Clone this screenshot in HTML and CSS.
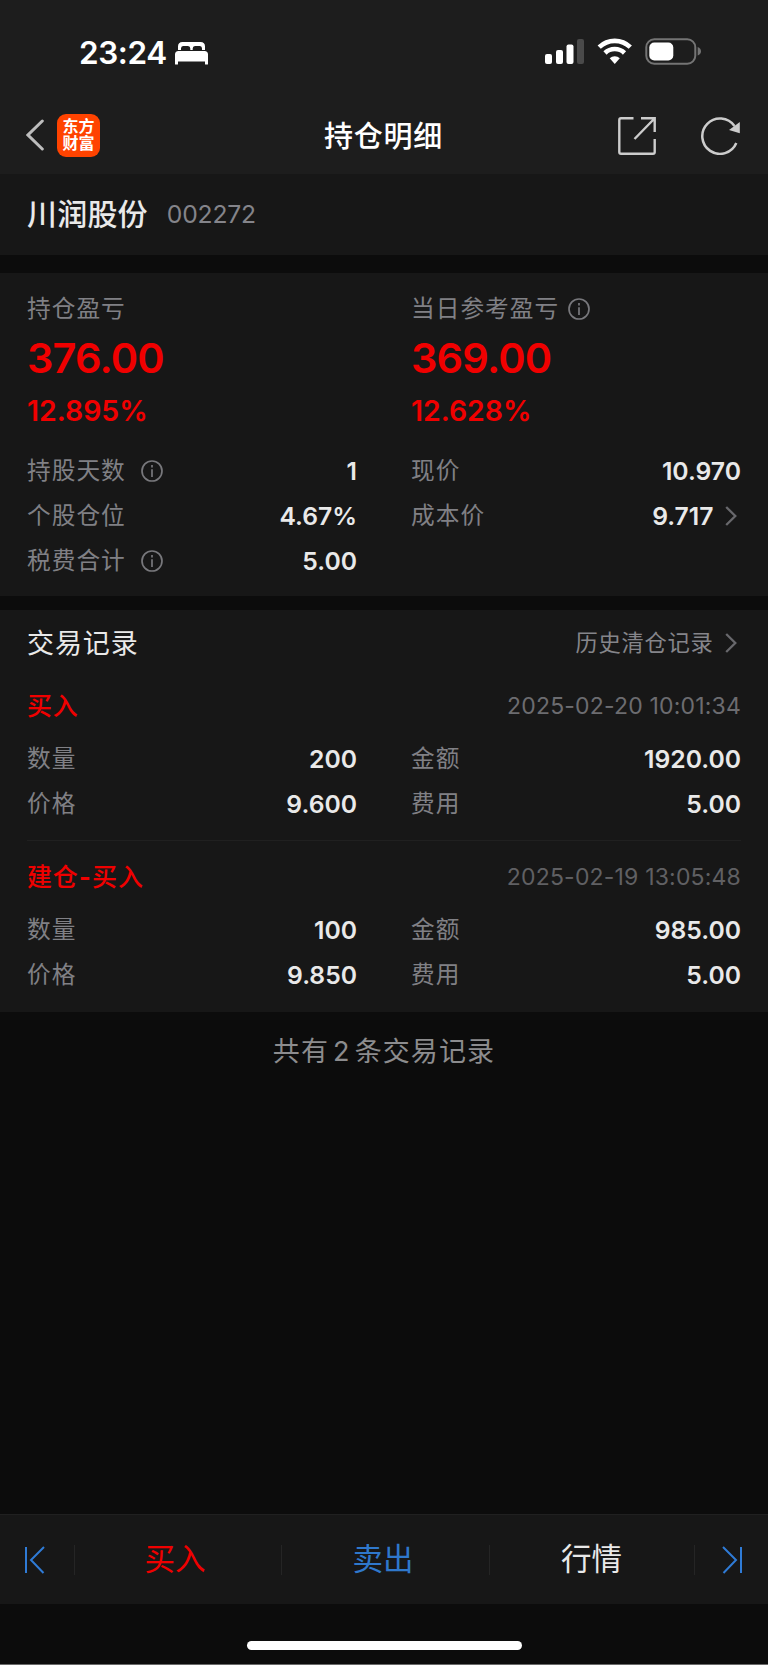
FILE: index.html
```html
<!DOCTYPE html>
<html lang="zh-CN">
<head>
<meta charset="utf-8">
<title>持仓明细</title>
<link rel="stylesheet" href="styles.css">
</head>
<body>
<div class="screen">
  <header class="top">
    <div class="status">
      <div class="status-left">
        <span class="clock">23:24</span>
        <svg class="bed" width="33" height="23" viewBox="0 0 33 23"><path fill="#fff" d="M3 8V4.500Q3 0 7.500 0H25.500Q30 0 30 4.500V8H27V6.500Q27 4 25 4H20Q17.700 4 17.700 6.500V8H15.300V6.500Q15.300 4 13 4H8Q6 4 6 6.500V8ZM0 22V12.500Q0 9 3.500 9H29.500Q33 9 33 12.500V22Q33 22.500 32.500 22.500H30.500Q30 22.500 30 22V19.500H3V22Q3 22.500 2.500 22.500H.5Q0 22.500 0 22Z"/></svg>
      </div>
      <svg class="indicators" width="157" height="28" viewBox="0 0 157 28">
        <g fill="#fff"><rect x="0" y="16" width="7" height="10" rx="2"/><rect x="11" y="12" width="7" height="14" rx="2"/><rect x="21.500" y="6.500" width="7" height="19.500" rx="2"/></g>
        <rect x="32" y="1" width="7" height="25" rx="2" fill="#4a4a4a"/>
        <g fill="none" stroke="#fff" stroke-width="4.600"><path d="M54.200 9.200A22.200 22.200 0 0 1 85.300 9.200"/><path d="M60 15A14 14 0 0 1 79.500 15"/></g>
        <path fill="#fff" d="M64.700 20.200A7.400 7.400 0 0 1 74.800 20.200L69.750 26Z"/>
        <rect x="101.300" y="1.300" width="49" height="24.400" rx="8" fill="none" stroke="#747474" stroke-width="2"/>
        <rect x="104.300" y="4.500" width="24" height="18" rx="5" fill="#fff"/>
        <path fill="#747474" d="M152.700 9Q156 10.300 156 13.300T152.700 17.600Z"/>
      </svg>
    </div>
    <nav class="nav">
      <div class="nav-left">
        <svg width="18" height="32" viewBox="0 0 18 32"><path d="M16.300 2L2 16L16.300 30" fill="none" stroke="#bdbdbd" stroke-width="3" stroke-linecap="round"/></svg>
        <div class="logo"><span>东方</span><span>财富</span></div>
      </div>
      <h1 class="nav-title">持仓明细</h1>
      <div class="nav-right">
        <svg width="38" height="38" viewBox="0 0 38 38"><g fill="none" stroke="#ccc" stroke-width="2.400"><path d="M15.500 1.300H3Q1.300 1.300 1.300 3V35Q1.300 36.700 3 36.700H35Q36.700 36.700 36.700 35V22"/><path d="M23 1.300H36.700V15M36.500 1.500L16.500 22"/></g></svg>
        <svg width="40" height="38" viewBox="0 0 40 38"><path d="M35.300 26A17.700 17.700 0 1 1 33.500 9" fill="none" stroke="#ccc" stroke-width="2.500"/><path d="M38.800 5V16.200L28 13Z" fill="#ccc"/></svg>
      </div>
    </nav>
  </header>

  <section class="stock"><span class="stock-name">川润股份</span><span class="stock-code">002272</span></section>

  <section class="summary">
    <div class="cols">
      <div class="profit">
        <div class="label">持仓盈亏</div>
        <div class="amount">376.00</div>
        <div class="percent">12.895%</div>
      </div>
      <div class="profit">
        <div class="label">当日参考盈亏<svg class="info near" viewBox="0 0 22 22"><circle cx="11" cy="11" r="10"/><path d="M11 9.300V17M11 5V7.400"/></svg></div>
        <div class="amount">369.00</div>
        <div class="percent">12.628%</div>
      </div>
    </div>
    <div class="cols facts">
      <div class="row"><span class="label">持股天数<svg class="info" viewBox="0 0 22 22"><circle cx="11" cy="11" r="10"/><path d="M11 9.300V17M11 5V7.400"/></svg></span><b class="value">1</b></div>
      <div class="row"><span class="label">现价</span><b class="value">10.970</b></div>
      <div class="row"><span class="label">个股仓位</span><b class="value">4.67%</b></div>
      <div class="row"><span class="label">成本价</span><b class="value">9.717<svg class="more" viewBox="0 0 12 20"><path d="M1.200 1L10.300 10L1.200 19"/></svg></b></div>
      <div class="row"><span class="label">税费合计<svg class="info" viewBox="0 0 22 22"><circle cx="11" cy="11" r="10"/><path d="M11 9.300V17M11 5V7.400"/></svg></span><b class="value">5.00</b></div>
    </div>
  </section>

  <section class="records">
    <div class="records-head"><h2 class="records-title">交易记录</h2><span class="history">历史清仓记录<svg class="more" viewBox="0 0 12 20"><path d="M1.200 1L10.300 10L1.200 19"/></svg></span></div>
    <article class="record">
      <div class="record-head"><span class="kind">买入</span><time class="time">2025-02-20 10:01:34</time></div>
      <div class="cols">
        <div class="row"><span class="label">数量</span><b class="value">200</b></div>
        <div class="row"><span class="label">金额</span><b class="value">1920.00</b></div>
        <div class="row"><span class="label">价格</span><b class="value">9.600</b></div>
        <div class="row"><span class="label">费用</span><b class="value">5.00</b></div>
      </div>
    </article>
    <article class="record">
      <div class="record-head"><span class="kind">建仓<span class="dash">-</span>买入</span><time class="time dim">2025-02-19 13:05:48</time></div>
      <div class="cols">
        <div class="row"><span class="label">数量</span><b class="value">100</b></div>
        <div class="row"><span class="label">金额</span><b class="value">985.00</b></div>
        <div class="row"><span class="label">价格</span><b class="value">9.850</b></div>
        <div class="row"><span class="label">费用</span><b class="value">5.00</b></div>
      </div>
    </article>
  </section>

  <main class="total">共有<span class="count">2</span>条交易记录</main>

  <footer class="tabs">
    <div class="tab edge"><svg width="20" height="28" viewBox="0 0 20 28"><path d="M1 1V27M19 1L6 14L18.500 27"/></svg></div>
    <div class="tab buy">买入</div>
    <div class="tab sell">卖出</div>
    <div class="tab quote">行情</div>
    <div class="tab edge"><svg width="20" height="28" viewBox="0 0 20 28"><path d="M19 1V27M1 1L14 14L1.500 27"/></svg></div>
  </footer>
  <div class="home"><div class="home-bar"></div></div>
</div>
</body>
</html>
```

FILE: styles.css
```css
* { box-sizing: border-box; }
body {
  margin: 0;
  background: #0c0c0c;
  color: #e9e9e9;
  font-family: Inter, "Noto Sans CJK SC", sans-serif;
}
svg { display: block; flex: none; }
h1, h2 { margin: 0; }

.screen {
  display: flex;
  flex-direction: column;
  width: 768px;
  height: 1665px;
  border-bottom: 1px solid #6a6a6a;
}

.top { height: 174px; background: #1d1d1d; }
.status {
  display: flex;
  justify-content: space-between;
  padding: 38px 66px 0 79px;
  height: 98px;
}
.status-left { display: flex; height: 30px; align-items: center; gap: 8px; }
.clock { font-size: 31.500px; font-weight: 600; line-height: 30px; letter-spacing: -0.400px; color: #fff; }

.nav {
  display: grid;
  grid-template-columns: 1fr auto 1fr;
  align-items: center;
  height: 76px;
  padding: 0 27px 0 26px;
}
.nav-left { display: flex; align-items: center; gap: 13px; padding-bottom: 2px; }
.logo {
  display: flex;
  flex-direction: column;
  align-items: center;
  justify-content: center;
  width: 43px;
  height: 43px;
  border-radius: 9px;
  background: #ff4300;
  color: #fff;
  font-size: 16px;
  font-weight: 700;
  line-height: 17.500px;
}
.nav-title { padding-top: 1px; font-size: 29px; font-weight: 500; line-height: 40px; letter-spacing: 0.700px; color: #fff; }
.nav-right { display: flex; align-items: center; justify-content: flex-end; gap: 45px; padding-bottom: 1px; }

.stock {
  display: flex;
  align-items: center;
  height: 81px;
  padding: 0 27px 2px;
  background: #171717;
}
.stock-name { font-size: 30px; font-weight: 500; line-height: 40px; letter-spacing: 0.200px; }
.stock-code { margin-left: 19px; font-size: 24.700px; line-height: 40px; letter-spacing: -0.200px; color: #84848a; }

.summary { height: 323px; margin-top: 18px; padding: 18px 27px 0; background: #171717; }
.cols { display: grid; grid-template-columns: 1fr 1fr; column-gap: 54px; }
.label {
  display: flex;
  align-items: center;
  font-size: 23.700px;
  line-height: 36px;
  letter-spacing: 1px;
  color: #808085;
}
.amount { font-size: 41.500px; font-weight: 600; line-height: 62px; letter-spacing: -0.800px; color: #f00000; }
.percent { padding-top: 1px; font-size: 28.400px; font-weight: 600; line-height: 42px; color: #f00000; }
.facts { margin-top: 17px; }
.row { display: flex; align-items: center; justify-content: space-between; height: 44.700px; }
.value { display: flex; align-items: center; font-size: 24.700px; font-weight: 600; line-height: 36px; }
.info { width: 22px; height: 22px; margin-left: 15px; fill: none; stroke: #78787c; stroke-width: 1.700px; }
.near { margin-left: 9px; }
.more { width: 12px; height: 20px; margin: 0 4px 0 11.500px; fill: none; stroke: #68686c; stroke-width: 2.300px; }

.records { height: 402px; margin-top: 14px; padding: 0 27px; background: #171717; }
.records-head { display: flex; align-items: center; justify-content: space-between; height: 66px; }
.records-title { padding-top: 1px; font-size: 27px; font-weight: 400; line-height: 40px; letter-spacing: 0.900px; }
.history { display: flex; align-items: center; font-size: 22.300px; line-height: 36px; letter-spacing: 0.700px; color: #85858a; }
.record { padding-bottom: 14px; }
.record + .record { padding-top: 6px; border-top: 1px solid #202020; }
.record-head { display: flex; align-items: center; justify-content: space-between; height: 60.600px; padding-bottom: 1px; }
.kind { font-size: 25px; font-weight: 500; line-height: 36px; letter-spacing: 0.800px; color: #f00000; }
.dash { margin: 0 0.500px; font-weight: 700; }
.time { font-size: 23px; line-height: 36px; letter-spacing: 0.180px; color: #6c6c70; }
.dim { color: #606063; }

.total { flex: 1; padding-top: 20px; text-align: center; font-size: 27px; line-height: 40px; letter-spacing: 1.100px; color: #8c8c8e; }
.count { margin: 0 4px; }

.tabs {
  display: grid;
  grid-template-columns: 74px 207px 208px 205px 74px;
  align-items: center;
  height: 90px;
  border-top: 1px solid #202020;
  background: #171717;
}
.tab {
  display: flex;
  align-items: center;
  justify-content: center;
  height: 30px;
  padding-bottom: 1px;
  font-size: 30.500px;
  line-height: 30px;
}
.tab + .tab { border-left: 1px solid #252525; }
.edge { padding-bottom: 0; }
.edge svg { fill: none; stroke: #2f7bd6; stroke-width: 2px; }
.edge:first-child { padding-right: 4px; }
.edge:last-child { padding-left: 0; }
.buy { padding-right: 6px; color: #f00000; }
.sell { padding-right: 5px; color: #2f78cc; }
.quote { padding-right: 1px; color: #e9e9e9; }

.home { display: flex; justify-content: center; height: 60px; padding-top: 37px; }
.home-bar { width: 275px; height: 9px; border-radius: 5px; background: #fff; }
```
